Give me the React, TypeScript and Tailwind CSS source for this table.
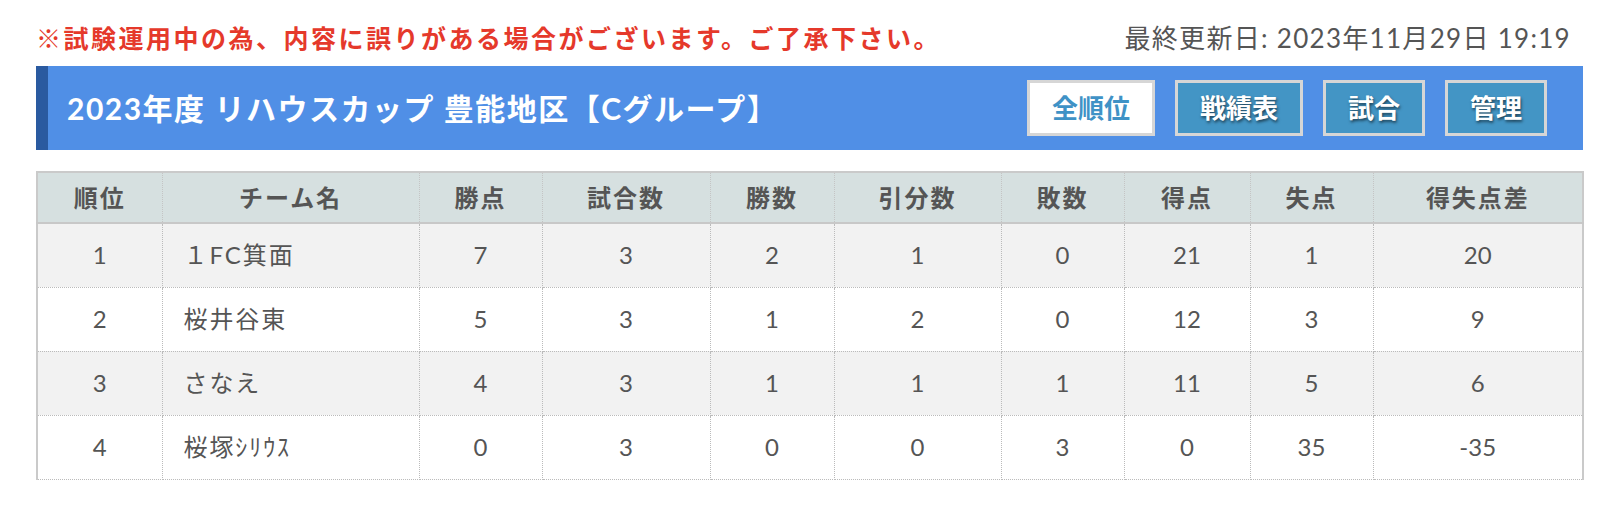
import React from 'react';

interface Row {
  rank: number;
  team: string;
  points: number;
  played: number;
  won: number;
  drawn: number;
  lost: number;
  goalsFor: number;
  goalsAgainst: number;
  diff: number;
}

const rows: Row[] = [
  { rank: 1, team: '１FC箕面', points: 7, played: 3, won: 2, drawn: 1, lost: 0, goalsFor: 21, goalsAgainst: 1, diff: 20 },
  { rank: 2, team: '桜井谷東', points: 5, played: 3, won: 1, drawn: 2, lost: 0, goalsFor: 12, goalsAgainst: 3, diff: 9 },
  { rank: 3, team: 'さなえ', points: 4, played: 3, won: 1, drawn: 1, lost: 1, goalsFor: 11, goalsAgainst: 5, diff: 6 },
  { rank: 4, team: '桜塚ｼﾘｳｽ', points: 0, played: 3, won: 0, drawn: 0, lost: 3, goalsFor: 0, goalsAgainst: 35, diff: -35 },
];

const headers = ['順位', 'チーム名', '勝点', '試合数', '勝数', '引分数', '敗数', '得点', '失点', '得失点差'];

// column widths taken from the screenshot
const colClasses = [
  'w-[125px]',
  'w-[257px]',
  'w-[123px]',
  'w-[168px]',
  'w-[124px]',
  'w-[167px]',
  'w-[123px]',
  'w-[126px]',
  'w-[123px]',
  'w-[210px]',
];

const navButtons = ['戦績表', '試合', '管理'];

export default function App() {
  return (
    <div className="min-h-[520px] bg-white font-['Lato','Noto_Sans_CJK_JP',sans-serif] text-[#555]">
      <div className="w-[1547px] ml-[36px]">
        {/* notice + last update */}
        <div className="flex items-center justify-between h-[38px] mt-[19px] mb-[9px]">
          <p className="text-[25px] font-bold tracking-[0.1em] text-[#e5392b] leading-none">
            ※試験運用中の為、内容に誤りがある場合がございます。ご了承下さい。
          </p>
          <p className="text-[26px] tracking-[0.05em] leading-none pr-[12px]">
            最終更新日: 2023年11月29日 19:19
          </p>
        </div>

        {/* title bar */}
        <div className="flex items-center justify-between h-[84px] bg-[#508fe6] border-l-[12px] border-[#2a5aa0] pl-[19px] pr-[36px]">
          <h1 className="text-[30px] font-bold text-white tracking-[0.05em]">
            2023年度 リハウスカップ 豊能地区【Cグループ】
          </h1>
          <div className="flex gap-[20px]">
            <button className="h-[56px] px-[22px] border-[3px] border-[#d6d6d6] bg-white text-[26px] font-bold text-[#3f92c6]">
              全順位
            </button>
            {navButtons.map((label) => (
              <button
                key={label}
                className="h-[56px] px-[22px] border-[3px] border-[#d6d6d6] bg-[#4395c5] text-[26px] font-bold text-white [text-shadow:1px_2px_3px_rgba(0,0,0,0.55)]"
              >
                {label}
              </button>
            ))}
          </div>
        </div>

        {/* standings */}
        <table className="mt-[21px] w-full table-fixed border-collapse border-x-2 border-t-2 border-solid border-[#cacaca] text-[24px]">
          <colgroup>
            {colClasses.map((c, i) => (
              <col key={i} className={c} />
            ))}
          </colgroup>
          <thead>
            <tr className="bg-[#d6e0e0]">
              {headers.map((h) => (
                <th
                  key={h}
                  className="h-[51px] border-x border-dotted border-[#c4c4c4] border-b-2 border-b-[#c8c8c8] [border-bottom-style:solid] font-bold tracking-[0.08em]"
                >
                  {h}
                </th>
              ))}
            </tr>
          </thead>
          <tbody>
            {rows.map((r, i) => (
              <tr key={r.rank} className={i % 2 === 0 ? 'bg-[#f2f2f2]' : 'bg-white'}>
                <td className="h-[64px] border border-dotted border-[#bbb] text-center">{r.rank}</td>
                <td className="h-[64px] border border-dotted border-[#bbb] pl-[21px] tracking-[0.08em]">{r.team}</td>
                <td className="h-[64px] border border-dotted border-[#bbb] text-center">{r.points}</td>
                <td className="h-[64px] border border-dotted border-[#bbb] text-center">{r.played}</td>
                <td className="h-[64px] border border-dotted border-[#bbb] text-center">{r.won}</td>
                <td className="h-[64px] border border-dotted border-[#bbb] text-center">{r.drawn}</td>
                <td className="h-[64px] border border-dotted border-[#bbb] text-center">{r.lost}</td>
                <td className="h-[64px] border border-dotted border-[#bbb] text-center">{r.goalsFor}</td>
                <td className="h-[64px] border border-dotted border-[#bbb] text-center">{r.goalsAgainst}</td>
                <td className="h-[64px] border border-dotted border-[#bbb] text-center">{r.diff}</td>
              </tr>
            ))}
          </tbody>
        </table>
      </div>
    </div>
  );
}
